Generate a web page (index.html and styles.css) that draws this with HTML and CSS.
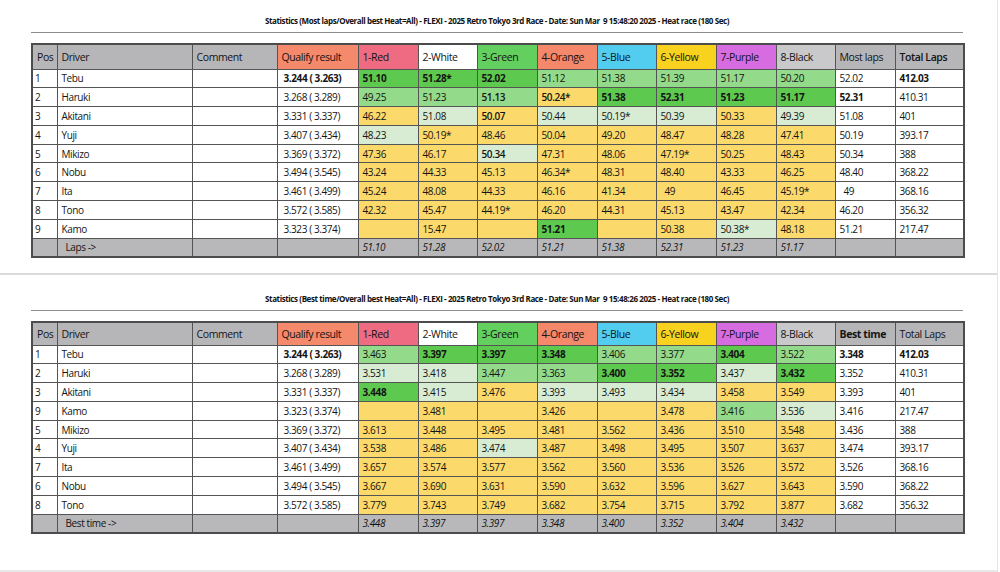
FILE: index.html
```html
<!DOCTYPE html>
<html lang="en">
<head>
<meta charset="utf-8">
<title>Statistics - 2025 Retro Tokyo 3rd Race</title>
<link rel="stylesheet" href="styles.css">
</head>
<body>
<div class="sheet">
  <section class="page page-top">
    <h1 class="title">Statistics (Most laps/Overall best Heat=All) - FLEXI - 2025 Retro Tokyo 3rd Race - Date: Sun Mar  9 15:48:20 2025 - Heat race (180 Sec)</h1>
    <hr class="rule">
    <table class="stats">
      <colgroup>
        <col class="w-pos"><col class="w-drv"><col class="w-com"><col class="w-q">
        <col class="w-h"><col class="w-h2"><col class="w-h"><col class="w-h"><col class="w-h2"><col class="w-h"><col class="w-h"><col class="w-h2"><col class="w-h"><col class="w-tot">
      </colgroup>
      <thead>
        <tr class="hrow">
          <th class="h-gray">Pos</th><th class="h-gray">Driver</th><th class="h-gray">Comment</th><th class="h-q">Qualify result</th>
          <th class="h-red">1-Red</th><th class="h-white">2-White</th><th class="h-green">3-Green</th><th class="h-orange">4-Orange</th><th class="h-blue">5-Blue</th><th class="h-yellow">6-Yellow</th><th class="h-purple">7-Purple</th><th class="h-black">8-Black</th><th class="h-gray">Most laps</th><th class="h-gray semi">Total Laps</th>
        </tr>
      </thead>
      <tbody>
        <tr><td class="pos">1</td><td>Tebu</td><td></td><td class="q b">3.244 ( 3.263)</td><td class="g b">51.10</td><td class="g b">51.28*</td><td class="g b">52.02</td><td class="m">51.12</td><td class="m">51.38</td><td class="m">51.39</td><td class="m">51.17</td><td class="m">50.20</td><td>52.02</td><td class="b">412.03</td></tr>
        <tr><td class="pos">2</td><td>Haruki</td><td></td><td class="q">3.268 ( 3.289)</td><td class="m">49.25</td><td class="m">51.23</td><td class="m semi">51.13</td><td class="y semi">50.24*</td><td class="g b">51.38</td><td class="g b">52.31</td><td class="g b">51.23</td><td class="g b">51.17</td><td class="b">52.31</td><td>410.31</td></tr>
        <tr><td class="pos">3</td><td>Akitani</td><td></td><td class="q">3.331 ( 3.337)</td><td class="y">46.22</td><td class="p">51.08</td><td class="y semi">50.07</td><td class="p">50.44</td><td class="p">50.19*</td><td class="p">50.39</td><td class="y">50.33</td><td class="p">49.39</td><td>51.08</td><td>401</td></tr>
        <tr><td class="pos">4</td><td>Yuji</td><td></td><td class="q">3.407 ( 3.434)</td><td class="p">48.23</td><td class="y">50.19*</td><td class="y">48.46</td><td class="y">50.04</td><td class="y">49.20</td><td class="y">48.47</td><td class="y">48.28</td><td class="y">47.41</td><td>50.19</td><td>393.17</td></tr>
        <tr><td class="pos">5</td><td>Mikizo</td><td></td><td class="q">3.369 ( 3.372)</td><td class="y">47.36</td><td class="y">46.17</td><td class="p semi">50.34</td><td class="y">47.31</td><td class="y">48.06</td><td class="y">47.19*</td><td class="y">50.25</td><td class="y">48.43</td><td>50.34</td><td>388</td></tr>
        <tr><td class="pos">6</td><td>Nobu</td><td></td><td class="q">3.494 ( 3.545)</td><td class="y">43.24</td><td class="y">44.33</td><td class="y">45.13</td><td class="y">46.34*</td><td class="y">48.31</td><td class="y">48.40</td><td class="y">43.33</td><td class="y">46.25</td><td>48.40</td><td>368.22</td></tr>
        <tr><td class="pos">7</td><td>Ita</td><td></td><td class="q">3.461 ( 3.499)</td><td class="y">45.24</td><td class="y">48.08</td><td class="y">44.33</td><td class="y">46.16</td><td class="y">41.34</td><td class="y ind">49</td><td class="y">46.45</td><td class="y">45.19*</td><td class="ind">49</td><td>368.16</td></tr>
        <tr><td class="pos">8</td><td>Tono</td><td></td><td class="q">3.572 ( 3.585)</td><td class="y">42.32</td><td class="y">45.47</td><td class="y">44.19*</td><td class="y">46.20</td><td class="y">44.31</td><td class="y">45.13</td><td class="y">43.47</td><td class="y">42.34</td><td>46.20</td><td>356.32</td></tr>
        <tr><td class="pos">9</td><td>Kamo</td><td></td><td class="q">3.323 ( 3.374)</td><td class="y"></td><td class="y">15.47</td><td class="y"></td><td class="g b">51.21</td><td class="y"></td><td class="y">50.38</td><td class="p">50.38*</td><td class="y">48.18</td><td>51.21</td><td>217.47</td></tr>
        <tr class="foot"><td></td><td class="flabel">Laps -&gt;</td><td></td><td></td><td>51.10</td><td>51.28</td><td>52.02</td><td>51.21</td><td>51.38</td><td>52.31</td><td>51.23</td><td>51.17</td><td></td><td></td></tr>
      </tbody>
    </table>
  </section>

  <section class="page page-bottom">
    <h1 class="title">Statistics (Best time/Overall best Heat=All) - FLEXI - 2025 Retro Tokyo 3rd Race - Date: Sun Mar  9 15:48:26 2025 - Heat race (180 Sec)</h1>
    <hr class="rule">
    <table class="stats">
      <colgroup>
        <col class="w-pos"><col class="w-drv"><col class="w-com"><col class="w-q">
        <col class="w-h"><col class="w-h2"><col class="w-h"><col class="w-h"><col class="w-h2"><col class="w-h"><col class="w-h"><col class="w-h2"><col class="w-h"><col class="w-tot">
      </colgroup>
      <thead>
        <tr class="hrow hrow-b">
          <th class="h-gray">Pos</th><th class="h-gray">Driver</th><th class="h-gray">Comment</th><th class="h-q">Qualify result</th>
          <th class="h-red">1-Red</th><th class="h-white">2-White</th><th class="h-green">3-Green</th><th class="h-orange">4-Orange</th><th class="h-blue">5-Blue</th><th class="h-yellow">6-Yellow</th><th class="h-purple">7-Purple</th><th class="h-black">8-Black</th><th class="h-gray b">Best time</th><th class="h-gray">Total Laps</th>
        </tr>
      </thead>
      <tbody>
        <tr><td class="pos">1</td><td>Tebu</td><td></td><td class="q b">3.244 ( 3.263)</td><td class="m">3.463</td><td class="g b">3.397</td><td class="g b">3.397</td><td class="g b">3.348</td><td class="m">3.406</td><td class="m">3.377</td><td class="g b">3.404</td><td class="m">3.522</td><td class="b">3.348</td><td class="b">412.03</td></tr>
        <tr><td class="pos">2</td><td>Haruki</td><td></td><td class="q">3.268 ( 3.289)</td><td class="p">3.531</td><td class="p">3.418</td><td class="m">3.447</td><td class="m">3.363</td><td class="g b">3.400</td><td class="g b">3.352</td><td class="p">3.437</td><td class="g b">3.432</td><td>3.352</td><td>410.31</td></tr>
        <tr><td class="pos">3</td><td>Akitani</td><td></td><td class="q">3.331 ( 3.337)</td><td class="g b">3.448</td><td class="p">3.415</td><td class="y">3.476</td><td class="p">3.393</td><td class="p">3.493</td><td class="p">3.434</td><td class="y">3.458</td><td class="y">3.549</td><td>3.393</td><td>401</td></tr>
        <tr><td class="pos">9</td><td>Kamo</td><td></td><td class="q">3.323 ( 3.374)</td><td class="y"></td><td class="y">3.481</td><td class="y"></td><td class="y">3.426</td><td class="y"></td><td class="y">3.478</td><td class="m">3.416</td><td class="p">3.536</td><td>3.416</td><td>217.47</td></tr>
        <tr><td class="pos">5</td><td>Mikizo</td><td></td><td class="q">3.369 ( 3.372)</td><td class="y">3.613</td><td class="y">3.448</td><td class="y">3.495</td><td class="y">3.481</td><td class="y">3.562</td><td class="y">3.436</td><td class="y">3.510</td><td class="y">3.548</td><td>3.436</td><td>388</td></tr>
        <tr><td class="pos">4</td><td>Yuji</td><td></td><td class="q">3.407 ( 3.434)</td><td class="y">3.538</td><td class="y">3.486</td><td class="p">3.474</td><td class="y">3.487</td><td class="y">3.498</td><td class="y">3.495</td><td class="y">3.507</td><td class="y">3.637</td><td>3.474</td><td>393.17</td></tr>
        <tr><td class="pos">7</td><td>Ita</td><td></td><td class="q">3.461 ( 3.499)</td><td class="y">3.657</td><td class="y">3.574</td><td class="y">3.577</td><td class="y">3.562</td><td class="y">3.560</td><td class="y">3.536</td><td class="y">3.526</td><td class="y">3.572</td><td>3.526</td><td>368.16</td></tr>
        <tr><td class="pos">6</td><td>Nobu</td><td></td><td class="q">3.494 ( 3.545)</td><td class="y">3.667</td><td class="y">3.690</td><td class="y">3.631</td><td class="y">3.590</td><td class="y">3.632</td><td class="y">3.596</td><td class="y">3.627</td><td class="y">3.643</td><td>3.590</td><td>368.22</td></tr>
        <tr><td class="pos">8</td><td>Tono</td><td></td><td class="q">3.572 ( 3.585)</td><td class="y">3.779</td><td class="y">3.743</td><td class="y">3.749</td><td class="y">3.682</td><td class="y">3.754</td><td class="y">3.715</td><td class="y">3.792</td><td class="y">3.877</td><td>3.682</td><td>356.32</td></tr>
        <tr class="foot"><td></td><td class="flabel">Best time -&gt;</td><td></td><td></td><td>3.448</td><td>3.397</td><td>3.397</td><td>3.348</td><td>3.400</td><td>3.352</td><td>3.404</td><td>3.432</td><td></td><td></td></tr>
      </tbody>
    </table>
  </section>
</div>
</body>
</html>
```

FILE: styles.css
```css
html, body {
  margin: 0;
  padding: 0;
  background: #ffffff;
}

body {
  width: 1000px;
  height: 572px;
  overflow: hidden;
  font-family: "Open Sans", "Noto Sans", "Liberation Sans", sans-serif;
  color: #151515;
}

.sheet {
  width: 997px;
  height: 570px;
  display: flex;
  flex-direction: column;
  border-right: 1px solid #e4e4e4;
  border-bottom: 2px solid #e8e8e8;
}

.page {
  box-sizing: border-box;
  padding-left: 31px;
}

.page-top {
  height: 273px;
  padding-top: 16px;
}

.page-bottom {
  flex: 1;
  border-top: 2px solid #dadada;
  padding-top: 19px;
}

.title {
  margin: 0;
  width: 932px;
  text-align: center;
  font-size: 8px;
  line-height: 10px;
  font-weight: 700;
  letter-spacing: -0.4px;
  white-space: pre;
  color: #111;
}

.rule {
  margin: 6px 0 0;
  width: 932px;
  height: 1px;
  border: 0;
  background: #8c8c8c;
}

.stats {
  margin-top: 10px;
  width: 932px;
  table-layout: fixed;
  border-collapse: collapse;
  border: 2px solid #4c4c4c;
  font-size: 10px;
  letter-spacing: -0.4px;
  color: #141414;
}

.w-pos { width: 25px; }
.w-drv { width: 135px; }
.w-com { width: 85px; }
.w-q { width: 81px; }
.w-h { width: 60px; }
.w-h2 { width: 59px; }
.w-tot { width: 69px; }

.stats th,
.stats td {
  border: 1px solid #545454;
  padding: 0 0 0 4px;
  text-align: left;
  font-weight: 400;
  white-space: nowrap;
  overflow: hidden;
  color: #141414;
}

.stats th {
  font-size: 10.5px;
}

.stats tbody tr { height: 18.8px; }
.hrow { height: 25px; }
.hrow-b { height: 23px; }

.stats .pos { padding-left: 2px; }
.stats .q { padding-left: 6px; }
.stats .ind { padding-left: 8px; }

.b { font-weight: 700 !important; }
.semi { font-weight: 600 !important; }

/* header colours */
.h-gray { background: #b6b6b9; }
.h-q { background: #f5896b; }
.h-red { background: #ee6b82; }
.h-white { background: #ffffff; }
.h-green { background: #63cf5e; }
.h-orange { background: #f5876b; }
.h-blue { background: #52cdf0; }
.h-yellow { background: #f8d21e; }
.h-purple { background: #d76ce0; }
.h-black { background: #c9c9cc; }

/* cell colours */
.g { background: #5ec94f; }
.m { background: #93da8a; }
.p { background: #d7ecd3; }
.y { background: #fbd96b; }

.foot td {
  background: #b8b8bb;
  font-style: italic;
}

.stats .flabel {
  font-style: normal;
  padding-left: 8px;
}
```
